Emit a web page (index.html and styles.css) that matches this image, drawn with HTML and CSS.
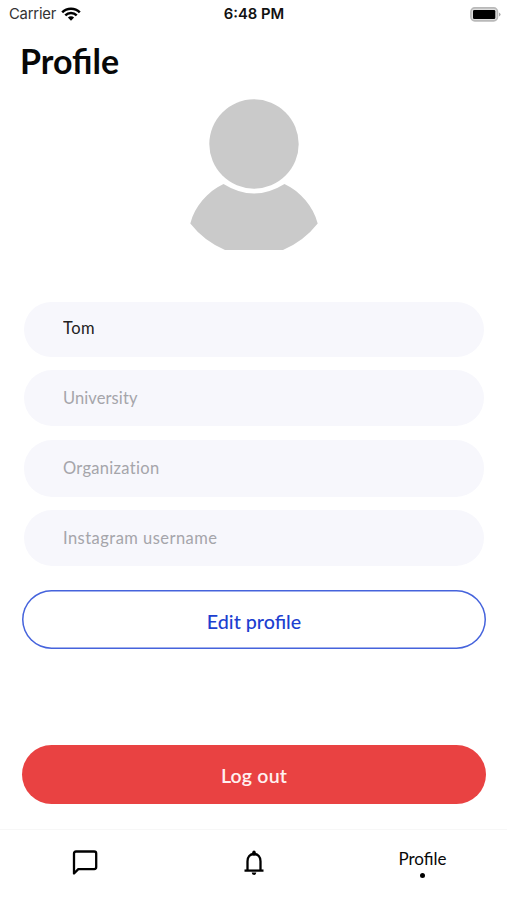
FILE: index.html
```html
<!DOCTYPE html>
<html lang="en">
<head>
<meta charset="utf-8">
<title>Profile</title>
<link rel="stylesheet" href="styles.css">
</head>
<body>
<div class="screen">
  <header class="status">
    <div class="carrier"><span>Carrier</span>
      <svg width="20" height="14" viewBox="0 0 20 14" fill="none" stroke="#000" stroke-width="2.5"><path d="M1.2 5.3a12.4 12.4 0 0 1 17.6 0M4.3 8.4a8 8 0 0 1 11.4 0"/><path d="M10 13.7 6.9 10.6a4.4 4.4 0 0 1 6.2 0z" fill="#000" stroke="none"/></svg>
    </div>
    <span class="time">6:48 PM</span>
    <svg class="battery" width="31" height="15" viewBox="0 0 31 15"><rect x=".9" y=".9" width="26.6" height="13" rx="3.8" fill="#ddd" stroke="#b9b9b9" stroke-width="1.6"/><rect x="3" y="3" width="22.3" height="9" rx="1.3"/><path d="M29 5.400q3.200 2 0 4z" fill="#aaa"/></svg>
  </header>
  <h1 class="title">Profile</h1>
  <svg class="avatar" width="130" height="152" viewBox="0 0 130 152" fill="#cacaca"><circle cx="65" cy="45" r="44.700"/><path d="M34.500 85Q65 104 95.500 85C112 93 124 107 128.700 124.500Q115 142 94 151H36Q15 142 1.300 124.500C6 107 18 93 34.500 85Z"/></svg>
  <form class="form">
    <input class="field" aria-label="Name" value="Tom">
    <input class="field university" placeholder="University">
    <input class="field organization" placeholder="Organization">
    <input class="field instagram" placeholder="Instagram username">
    <button type="button" class="button edit">Edit profile</button>
    <button type="button" class="button logout">Log out</button>
  </form>
  <nav class="tabs">
    <a class="tab"><svg width="28" height="28" viewBox="0 0 28 28" fill="none" stroke="#000" stroke-width="2.300" stroke-linejoin="round"><path d="M3 24.500V4.500Q3 2.500 5 2.500H23.200Q25.200 2.500 25.200 4.500V18.100Q25.200 20.100 23.200 20.100H7.300Z"/></svg></a>
    <a class="tab"><svg width="24" height="28" viewBox="0 0 24 28" fill="none" stroke="#000" stroke-width="2.300"><path d="M5.500 21V12.200C5.500 8 8 5 12 5s6.500 3 6.500 7.200V21"/><path d="M2.500 21.600H21.500"/><path d="M12 3.200V5" stroke-width="3.400" stroke-linecap="round"/><path d="M9.700 23.600h4.600a2.300 2.300 0 0 1-4.600 0z" fill="#000" stroke="none"/></svg></a>
    <a class="tab active"><span>Profile</span><i class="dot"></i></a>
  </nav>
</div>
</body>
</html>
```
FILE: styles.css
```css
* { box-sizing: border-box; }
body { margin: 0; background: #fff; font-family: Lato, "Open Sans", sans-serif; color: #080808; }
.screen { height: 900px; width: 507px; display: flex; flex-direction: column; overflow: hidden; }
.status { height: 27px; padding: 0 6px 0 9px; display: grid; grid-template-columns: 1fr auto 1fr; align-items: center; font: 14.8px/27px Inter, sans-serif; }
.carrier { display: flex; align-items: center; gap: 5px; color: #333; letter-spacing: -.2px; }
.carrier span, .time { padding-top: 1px; }
.time { margin-left: -2px; font-weight: 600; color: #111; }
.battery { justify-self: end; }
.title { margin: 14px 0 0 20px; height: 40px; font-size: 34px; line-height: 40px; font-weight: 700; }
.avatar { margin: 18px auto 0; flex: none; }
.form { margin: 51px 0 0 1px; display: flex; flex-direction: column; }
.field { height: 55px; margin: 0 23px 14px; padding: 0 39px 3px; border: 0; border-radius: 28px; background: #f7f7fc; color: #222; font: 16.5px Lato, sans-serif; letter-spacing: .46px; }
.field:first-child { margin-bottom: 13px; }
.university, .instagram { height: 56px; padding-bottom: 1px; }
.organization { height: 57px; margin-bottom: 13px; padding-bottom: 2px; letter-spacing: .3px; }
.university { letter-spacing: .1px; }
.field::placeholder { color: #a5a5aa; opacity: 1; }
.button { height: 59px; margin: 0 21px; padding: 3px 0 0; border: 0; border-radius: 30px; }
.edit { margin-top: 10px; box-shadow: inset 0 0 0 1.5px #4563dc; background: #fff; color: #1d3fd0; font: 500 19.7px "Lato Medium", Lato, sans-serif; }
.logout { margin-top: 96px; padding-top: 2px; background: #e94242; color: #fff0f0; font: 600 19.5px Lato, sans-serif; letter-spacing: .2px; }
.tabs { margin-top: auto; height: 71px; border-top: 1px solid #f7f7f7; display: grid; grid-template-columns: repeat(3, 1fr); }
.tab { display: flex; flex-direction: column; align-items: center; padding-top: 19px; }
.active { font-size: 17px; line-height: 20px; }
.dot { width: 5px; height: 5px; border-radius: 50%; background: #000; margin-top: 4px; }
```
